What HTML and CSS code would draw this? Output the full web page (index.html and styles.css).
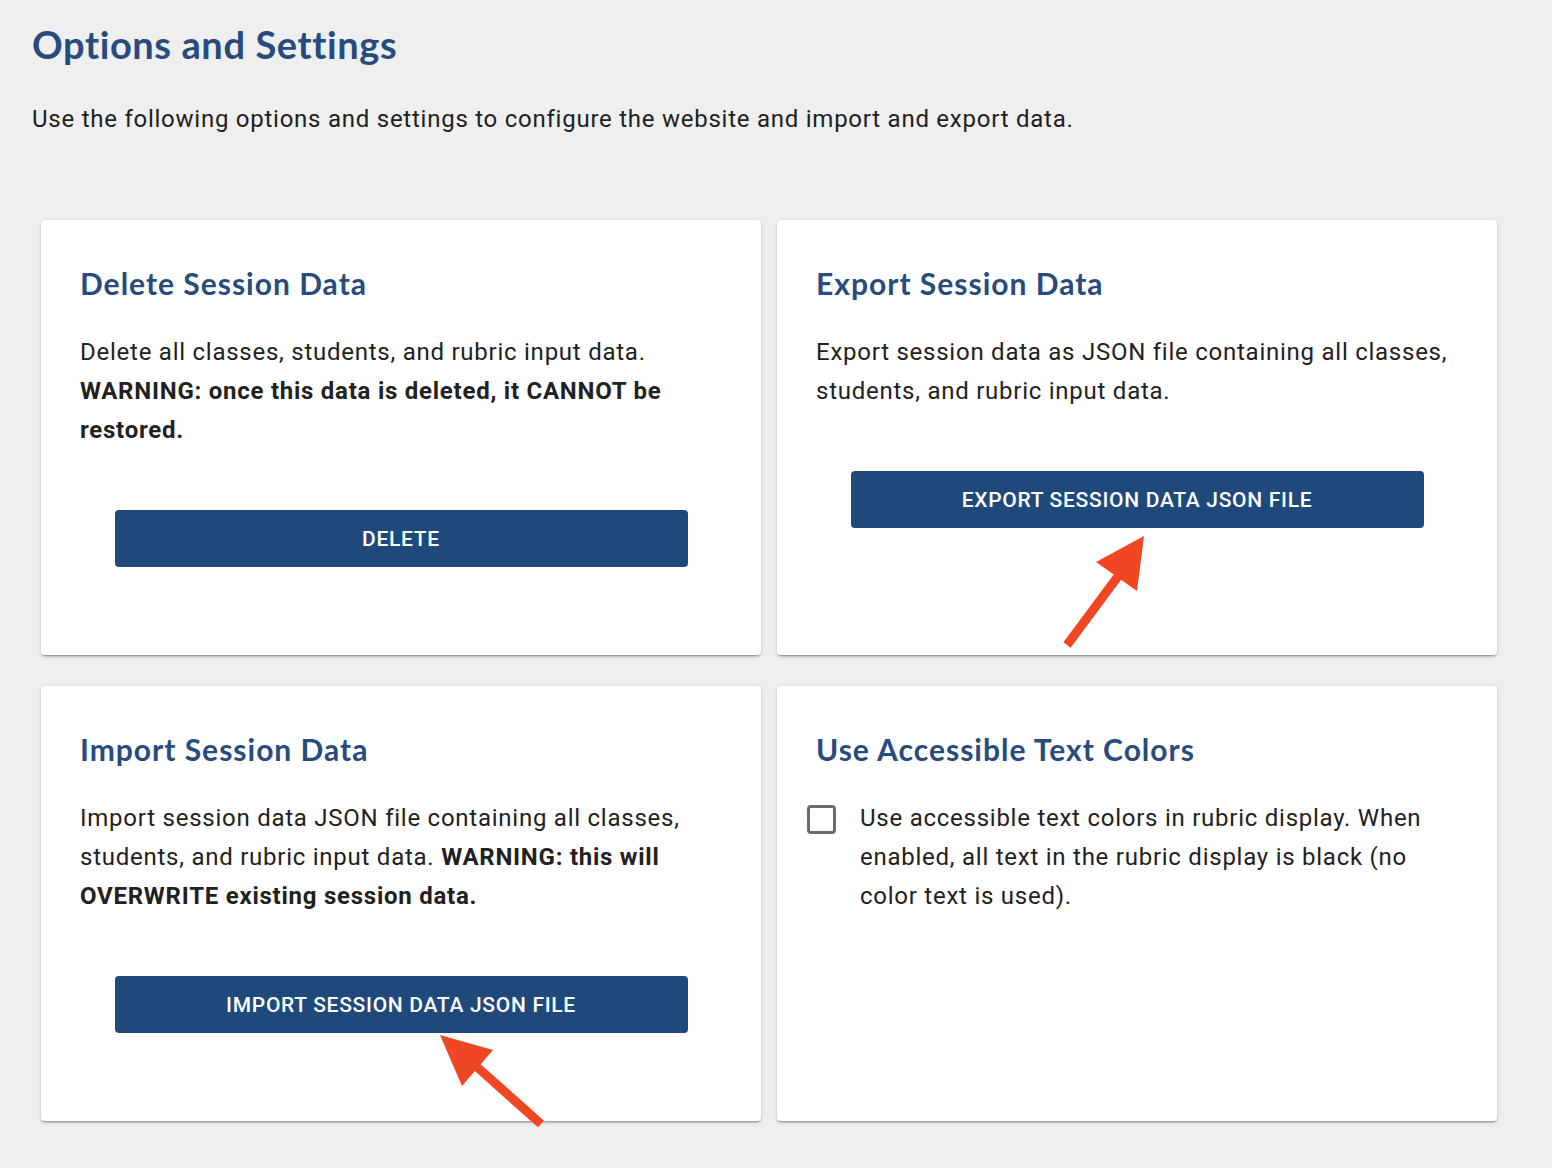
FILE: index.html
```html
<!DOCTYPE html>
<html lang="en">
<head>
<meta charset="utf-8">
<title>Options and Settings</title>
<link rel="stylesheet" href="styles.css">
</head>
<body>
<main class="page">
  <h1 class="page-title">Options and Settings</h1>
  <p class="intro">Use the following options and settings to configure the website and import and export data.</p>
  <div class="grid">
    <section class="card">
      <h2 class="card-title">Delete Session Data</h2>
      <p class="card-text">Delete all classes, students, and rubric input data. <strong>WARNING: once this data is deleted, it CANNOT be restored.</strong></p>
      <button class="btn" type="button">Delete</button>
    </section>
    <section class="card">
      <h2 class="card-title">Export Session Data</h2>
      <p class="card-text">Export session data as JSON file containing all classes, students, and rubric input data.</p>
      <button class="btn" type="button">Export Session Data JSON File</button>
    </section>
    <section class="card">
      <h2 class="card-title">Import Session Data</h2>
      <p class="card-text">Import session data JSON file containing all classes, students, and rubric input data. <strong>WARNING: this will OVERWRITE existing session data.</strong></p>
      <button class="btn" type="button">Import Session Data JSON File</button>
    </section>
    <section class="card">
      <h2 class="card-title">Use Accessible Text Colors</h2>
      <label class="check-row">
        <span class="checkbox"></span>
        <span class="card-text">Use accessible text colors in rubric display. When enabled, all text in the rubric display is black (no color text is used).</span>
      </label>
    </section>
  </div>
  <svg class="arrows" width="1552" height="1168" viewBox="0 0 1552 1168" aria-hidden="true">
    <line x1="1067" y1="645" x2="1119" y2="575" stroke="#ef4623" stroke-width="9"/>
    <polygon points="1144,536 1096,562 1137,591" fill="#ef4623"/>
    <line x1="541" y1="1124" x2="477" y2="1067" stroke="#ef4623" stroke-width="9"/>
    <polygon points="440,1035 493,1050 462,1086" fill="#ef4623"/>
  </svg>
</main>
</body>
</html>
```
FILE: styles.css
```css
html, body {
  margin: 0;
  padding: 0;
  background: #efefef;
}

.page {
  position: relative;
  padding: 22px 32px 40px;
  font-family: Roboto, "Liberation Sans", sans-serif;
  color: #212121;
}

.page-title {
  margin: 0;
  font-family: Lato, "Open Sans", sans-serif;
  font-weight: 700;
  font-size: 38px;
  line-height: 44px;
  letter-spacing: 0.6px;
  color: #274b7c;
}

.intro {
  margin: 34px 0 0;
  font-size: 24px;
  line-height: 39px;
  letter-spacing: 0.03125em;
}

.grid {
  display: grid;
  grid-template-columns: 720px 720px;
  column-gap: 16px;
  row-gap: 31px;
  margin: 81px 0 0 9px;
}

.card {
  display: flex;
  flex-direction: column;
  background: #fff;
  border-radius: 4px;
  padding: 40px 39px 40px 39px;
  box-shadow: 0 2px 2px rgba(0,0,0,0.14), 0 1px 5px rgba(0,0,0,0.12), 0 3px 1px -2px rgba(0,0,0,0.2);
}

.card-title {
  margin: 6px 0 33px;
  font-family: Lato, "Open Sans", sans-serif;
  font-weight: 700;
  font-size: 30px;
  line-height: 34px;
  letter-spacing: 1px;
  color: #274b7c;
}

.card-text {
  margin: 0;
  font-size: 24px;
  line-height: 39px;
  letter-spacing: 0.03125em;
  color: #212121;
}

.card-text strong {
  font-weight: 700;
}

.btn {
  align-self: center;
  width: 573px;
  height: 57px;
  margin: 60px 0 48px;
  border: none;
  border-radius: 4px;
  background: #1f497b;
  color: #fff;
  font-family: Roboto, "Liberation Sans", sans-serif;
  font-weight: 500;
  font-size: 21px;
  text-transform: uppercase;
  letter-spacing: 0.7px;
  cursor: pointer;
}

.check-row {
  display: flex;
  align-items: flex-start;
  gap: 24px;
  margin-left: -9px;
}

.checkbox {
  flex: none;
  box-sizing: border-box;
  width: 29px;
  height: 29px;
  margin-top: 6px;
  border: 3px solid #6b6b6b;
  border-radius: 4px;
  background: #fff;
}

.arrows {
  position: absolute;
  top: 0;
  left: 0;
  pointer-events: none;
}
```
